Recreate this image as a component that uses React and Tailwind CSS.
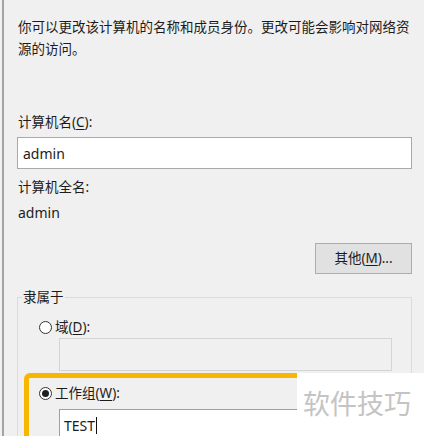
import React from "react";

const font = { fontFamily: '"Noto Sans", "Noto Sans CJK SC", sans-serif' };

const U = ({ children }) => <span className="underline underline-offset-2">{children}</span>;

const Radio = ({ checked }) => (
    <span className="w-[13px] h-[13px] rounded-full border border-[#333] bg-white flex items-center justify-center shrink-0">
        {checked && <span className="w-[7px] h-[7px] rounded-full bg-[#1f1f1f]" />}
    </span>
);

const App = () => {
    return (
        <div
            className="relative w-[424px] h-[436px] overflow-hidden bg-[#f0f0f0] flex text-[#1c1c1c]"
            style={font}
        >
            <div className="ml-[2px] w-[2px] h-full bg-[#a3a3a3]" />

            <div className="flex-1 flex flex-col pl-[13px] pr-[12px] pt-[16px] *:shrink-0">
                <p className="pl-[1px] text-[13.5px] leading-[22px]">
                    你可以更改该计算机的名称和成员身份。更改可能会影响对网络资源的访问。
                </p>

                <p className="pl-[1px] mt-[52px] text-[13.5px] leading-[20px]">
                    计算机名(<U>C</U>):
                </p>
                <div className="mt-[5px] h-[32px] border border-[#a9a9a9] bg-white flex items-center pl-[5px] text-[14px]">
                    admin
                </div>

                <p className="pl-[1px] mt-[8px] text-[13.5px] leading-[20px]">计算机全名:</p>
                <p className="pl-[1px] mt-[6px] text-[14px] leading-[20px]">admin</p>

                <button className="self-end mt-[20px] w-[97px] h-[31px] border border-[#adadad] bg-[#e1e1e1] text-[13.5px] flex items-center justify-center">
                    其他(<U>M</U>)...
                </button>

                <fieldset className="mt-[13px] h-[200px] border border-[#dcdcdc]">
                    <legend className="ml-[4px] px-[1px] text-[13.5px] leading-[20px]">隶属于</legend>

                    <div className="mt-[10px] pl-[21px] flex items-center gap-[3px] text-[13.5px] leading-[20px]">
                        <Radio />
                        <span>
                            域(<U>D</U>):
                        </span>
                    </div>
                    <div className="mt-[1px] ml-[41px] w-[333px] h-[33px] border border-[#d4d4d4] bg-[#f0f0f0]" />

                    <div className="mt-[12px] pl-[21px] flex items-center gap-[3px] text-[13.5px] leading-[20px]">
                        <Radio checked />
                        <span>
                            工作组(<U>W</U>):
                        </span>
                    </div>
                    <div className="mt-[6px] ml-[41px] w-[333px] h-[33px] border border-[#7aa7d8] bg-white flex items-center pl-[4px] text-[14px]">
                        TEST
                        <span className="ml-[1px] w-[1px] h-[17px] bg-[#111]" />
                    </div>
                </fieldset>
            </div>

            {/* highlight annotation */}
            <div className="absolute left-[24px] top-[373px] w-[300px] h-[90px] border-[5px] border-[#f7b700] rounded-[6px] pointer-events-none" />

            {/* watermark */}
            <div className="absolute left-[297px] top-[373px] right-0 bottom-0 bg-white pl-[6px] pt-[14px]">
                <span className="text-[27px] leading-[34px] text-[#c4c4c4]">软件技巧</span>
            </div>
        </div>
    );
};

export default App;
